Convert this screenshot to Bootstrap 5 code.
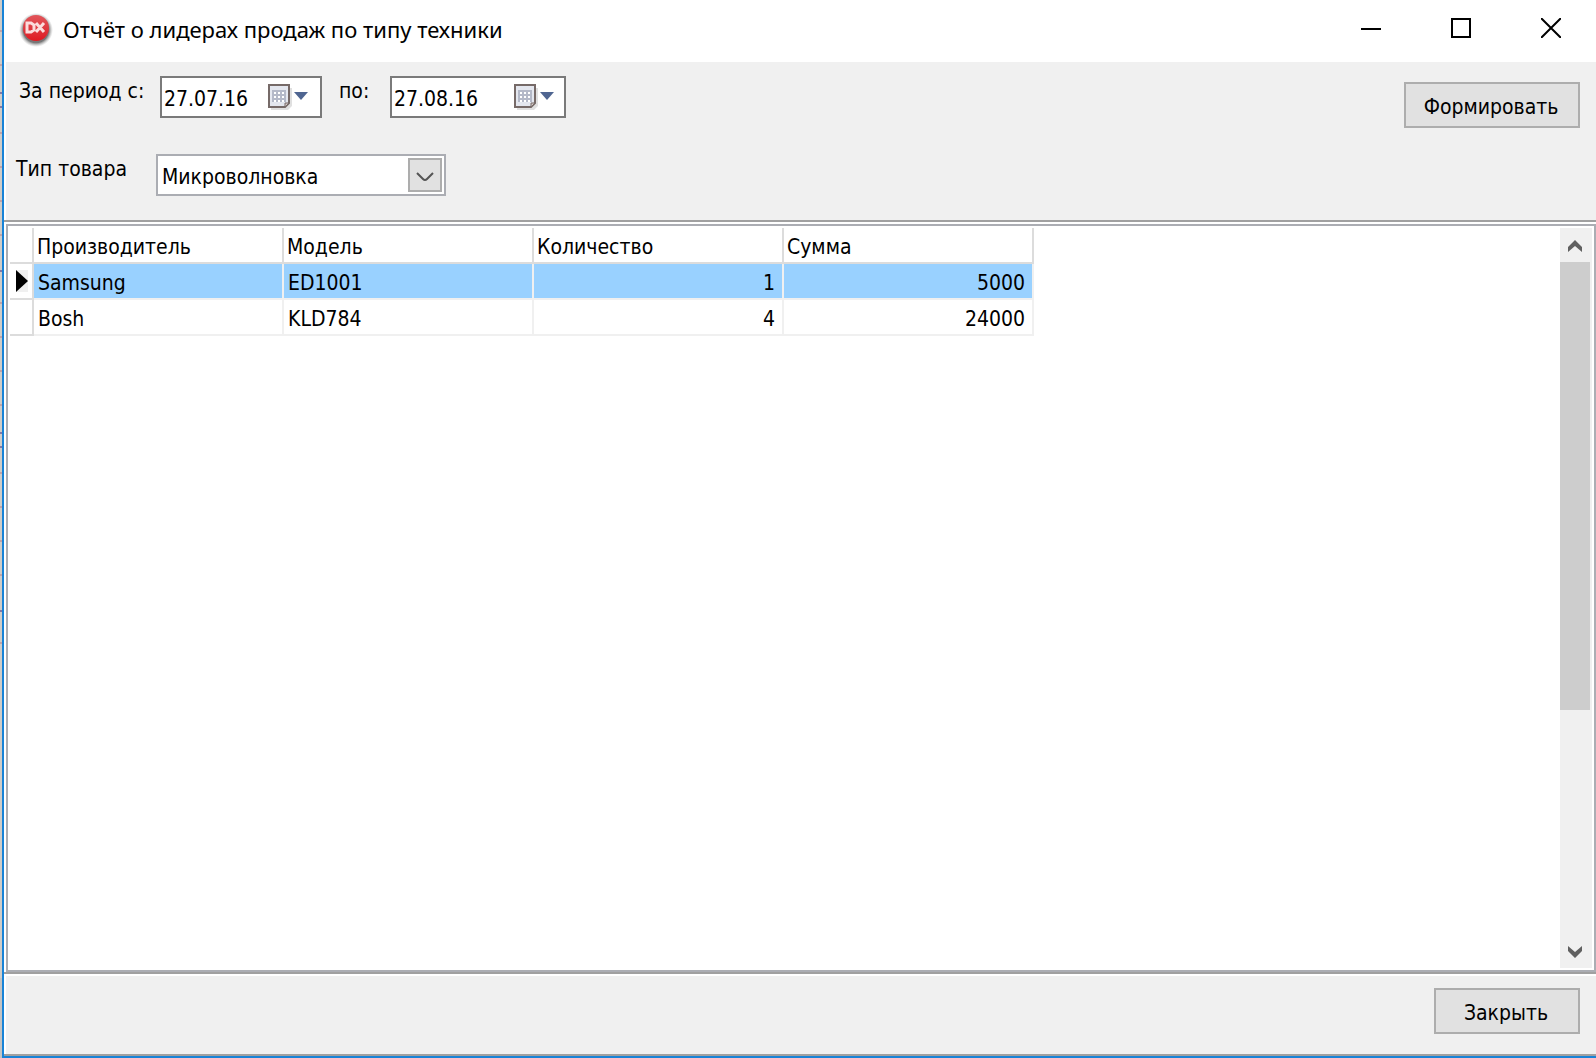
<!DOCTYPE html>
<html lang="ru">
<head>
<meta charset="utf-8">
<meta name="viewport" content="width=device-width, initial-scale=1">
<title>Отчёт о лидерах продаж по типу техники</title>
<link rel="stylesheet" href="https://cdn.jsdelivr.net/npm/bootstrap@5.3.0/dist/css/bootstrap.min.css">
<style>
body { font-family: "DejaVu Sans Condensed", "Noto Sans", sans-serif; font-size: 21px; line-height: 26px; color: #000; background: #d0cdc9; }
.edge { width: 2px; overflow: hidden; }
.app-window { border-left: 2px solid #1883d7; border-bottom: 2px solid #1883d7; background: #fff; min-width: 0; }
.title-bar { height: 62px; padding-left: 14px; }
.title-brand { height: 58px; }
.title-brand svg { margin-top: 4px; }
.title-text { font: 22px/30px "Noto Sans", sans-serif; margin-left: 9px; }
.caption-btn { width: 90px; height: 56px; border: 0; background: transparent; padding: 0; display: flex; align-items: center; justify-content: center; }
.tool-panel, .foot-panel { background: #f0f0f0; margin-left: 2px; }
.tool-panel { height: 158px; padding: 14px 16px 0 10px; }
.tool-panel label { padding-top: 2px; }
.date-label { padding-left: 3px; width: 144px; }
.to-label { width: 68px; padding-left: 17px; }
.type-label { width: 140px; }
.date-box { width: 162px; height: 42px; border: 2px solid #7a7a7a; background: #fff; }
.date-box.wide-box { width: 176px; }
.date-box input { border: 0; padding: 3px 0 0 2px; background: transparent; width: 100px; min-width: 0; color: #000; outline: 0; }
.date-box button { border: 0; padding: 2px 0 0; background: transparent; display: flex; width: 52px; }
.wide-box button { width: 50px; }
.type-row { margin-top: 36px; }
.type-wrap { width: 290px; }
.type-wrap select { width: 100%; height: 42px; appearance: none; border: 2px solid #abadb3; border-radius: 0; background: #fff; padding: 3px 40px 0 4px; color: #000; outline: 0; }
.type-arrow { position: absolute; right: 4px; top: 4px; width: 34px; height: 34px; border: 2px solid #adadad; background: #e1e1e1; pointer-events: none; display: flex; padding-top: 4px; }
.push-btn { --bs-btn-font-size: 21px; --bs-btn-line-height: 26px; --bs-btn-padding-x: 0; --bs-btn-padding-y: 0; --bs-btn-border-width: 2px; --bs-btn-border-radius: 0; --bs-btn-color: #000; --bs-btn-bg: #e1e1e1; --bs-btn-border-color: #adadad; --bs-btn-hover-bg: #e5f1fb; --bs-btn-hover-border-color: #0078d7; height: 46px; padding: 4px 2px 0 0; }
.make-btn { width: 176px; margin-top: 6px; }
.close-btn { width: 146px; }
.grid-frame { border-top: 2px solid #a0a0a0; border-bottom: 2px solid #a0a0a0; padding: 2px 0 0 2px; min-height: 0; }
.grid-box { border: 2px solid #abadb3; padding: 2px; min-height: 0; }
.data-grid { table-layout: fixed; width: 1024px; border-collapse: separate; border-spacing: 0; }
.data-grid th, .data-grid td { height: 36px; padding: 4px 7px 0 4px; border-right: 2px solid #f0f0f0; border-bottom: 2px solid #f0f0f0; font-weight: 400; line-height: 26px; white-space: nowrap; }
.data-grid th { padding-left: 3px; border-color: #dcdcdc; }
.data-grid .mark-cell { border-color: #dcdcdc; padding: 0; }
.data-grid .picked td:not(.mark-cell) { background: #99d1ff; }
.mark-cell svg { display: block; margin-left: 6px; background: #f0f0f0; }
.scroll-track { width: 32px; background: #f0f0f0; }
.scroll-track button { border: 0; background: transparent; padding: 2px 0 0; height: 34px; width: 30px; display: flex; align-items: center; justify-content: center; }
.scroll-thumb { width: 30px; background: #cdcdcd; flex: 448 0 0; }
.scroll-rest { flex: 224 0 0; }
.foot-panel { height: 78px; margin-top: 2px; padding: 12px 16px 0; }
.foot-line { height: 2px; background: #a0a0a0; }
</style>
<script src="https://cdn.jsdelivr.net/npm/bootstrap@5.3.0/dist/js/bootstrap.bundle.min.js"></script>
</head>
<body>
<div class="d-flex vh-100 overflow-hidden">
  <svg class="edge flex-shrink-0 h-100" width="2" height="1058" aria-hidden="true">
    <path d="M0 978h2v80H0z" fill="#c4c4c4"/>
    <path d="M0 31h2M0 65h2M0 133h2M0 167h2M0 201h2M0 235h2M0 303h2M0 337h2M0 371h2M0 405h2M0 473h2M0 507h2M0 541h2M0 575h2M0 643h2" stroke="#c4a5a8" stroke-width="2"/>
    <path d="M0 93h2M0 107h2M0 271h2M0 433h2M0 447h2M0 611h2" stroke="#8379a5" stroke-width="2"/>
  </svg>
  <main class="app-window d-flex flex-column flex-grow-1">
    <header class="title-bar d-flex flex-shrink-0">
      <div class="title-brand d-flex align-items-center flex-grow-1">
        <svg width="36" height="36" viewBox="0 0 36 36" aria-hidden="true">
          <defs>
            <radialGradient id="halo"><stop offset=".75" stop-color="#777"/><stop offset="1" stop-color="#bbb" stop-opacity="0"/></radialGradient>
            <linearGradient id="red" x2="0" y2="1"><stop stop-color="#e2555a"/><stop offset=".5" stop-color="#de3a40"/><stop offset="1" stop-color="#e01820"/></linearGradient>
          </defs>
          <circle cx="18" cy="17" r="17" fill="url(#halo)"/>
          <circle cx="18" cy="15" r="13" fill="url(#red)"/>
          <path d="M9 10h4l3 2v5l-3 2H9zM18 10l8 9M26 10l-8 9" fill="none" stroke="#fbdcdc" stroke-width="3"/>
        </svg>
        <h1 class="title-text mb-0">Отчёт о лидерах продаж по типу техники</h1>
      </div>
      <button class="caption-btn" type="button" aria-label="Свернуть"><svg width="20" height="20"><path d="M0 11h20" stroke="#000" stroke-width="2"/></svg></button>
      <button class="caption-btn" type="button" aria-label="Развернуть"><svg width="20" height="20"><path d="M1 1h18v18H1z" fill="none" stroke="#000" stroke-width="2"/></svg></button>
      <button class="caption-btn" type="button" aria-label="Закрыть окно"><svg width="20" height="20"><path d="M0 0l20 20M20 0L0 20" stroke="#000" stroke-width="2"/></svg></button>
    </header>

    <form class="tool-panel d-flex justify-content-between align-items-start flex-shrink-0">
      <div>
        <div class="d-flex align-items-start">
          <label class="date-label" for="from">За период с:</label>
          <div class="date-box d-flex align-items-center justify-content-between">
            <input id="from" type="text" value="27.07.16">
            <button type="button" aria-label="Выбрать начальную дату"><svg width="42" height="28"><use href="#calendar"/></svg></button>
          </div>
          <label class="to-label" for="to">по:</label>
          <div class="date-box wide-box d-flex align-items-center justify-content-between">
            <input id="to" type="text" value="27.08.16">
            <button type="button" aria-label="Выбрать конечную дату"><svg width="42" height="28"><use href="#calendar"/></svg></button>
          </div>
        </div>
        <div class="type-row d-flex align-items-start">
          <label class="type-label" for="kind">Тип товара</label>
          <div class="type-wrap position-relative">
            <select id="kind"><option>Микроволновка</option></select>
            <span class="type-arrow align-items-center justify-content-center"><svg width="18" height="10"><path d="M1 1l6 6q2 2 4 0l6-6" fill="none" stroke="#555" stroke-width="2"/></svg></span>
          </div>
        </div>
      </div>
      <button class="btn push-btn make-btn" type="button">Формировать</button>
    </form>

    <section class="grid-frame d-flex flex-grow-1">
      <div class="grid-box d-flex justify-content-between flex-grow-1">
        <div class="overflow-hidden">
          <table class="data-grid">
            <colgroup><col width="24"><col width="250"><col width="250"><col width="250"><col width="250"></colgroup>
            <thead><tr><th class="mark-cell"></th><th>Производитель</th><th>Модель</th><th>Количество</th><th>Сумма</th></tr></thead>
            <tbody>
              <tr class="picked"><td class="mark-cell"><svg width="12" height="22"><path d="M0 0l12 11L0 22z"/></svg></td><td>Samsung</td><td>ED1001</td><td class="text-end">1</td><td class="text-end">5000</td></tr>
              <tr><td class="mark-cell"></td><td>Bosh</td><td>KLD784</td><td class="text-end">4</td><td class="text-end">24000</td></tr>
            </tbody>
          </table>
        </div>
        <div class="scroll-track d-flex flex-column flex-shrink-0">
          <button type="button" aria-label="Вверх"><svg width="14" height="12"><path d="M0 7l7-7 7 7v5l-7-6-7 6z" fill="#606060"/></svg></button>
          <div class="scroll-thumb"></div>
          <div class="scroll-rest"></div>
          <button type="button" aria-label="Вниз"><svg width="14" height="12"><path d="M0 5l7 7 7-7V0L7 6 0 0z" fill="#606060"/></svg></button>
        </div>
      </div>
    </section>

    <footer class="foot-panel d-flex justify-content-end align-items-start flex-shrink-0">
      <button class="btn push-btn close-btn" type="button">Закрыть</button>
    </footer>
    <div class="foot-line flex-shrink-0"></div>
  </main>
</div>
<svg class="d-none" aria-hidden="true">
  <symbol id="calendar" viewBox="0 0 42 28">
    <path d="M3 4h21v18l-4 4H3z" fill="#000" opacity=".12"/>
    <path d="M1 1h20v18l-4 4H1z" fill="#e4e7ef" stroke="#766a68" stroke-width="2"/>
    <path d="M4 6h14v12H4z" fill="#b4b9c8"/>
    <path d="M6 8h2v2H6zM10 8h2v2h-2zM14 8h2v2h-2zM6 12h2v2H6zM10 12h2v2h-2zM14 12h2v2h-2zM6 16h2v2H6zM10 16h2v2h-2zM14 16h2v2h-2z" fill="#fff"/>
    <path d="M17 23v-4h4z" fill="#d5c9c6" stroke="#766a68" stroke-width="1"/>
    <path d="M26 8h14l-7 8z" fill="#4f6591"/>
  </symbol>
</svg>
</body>
</html>
